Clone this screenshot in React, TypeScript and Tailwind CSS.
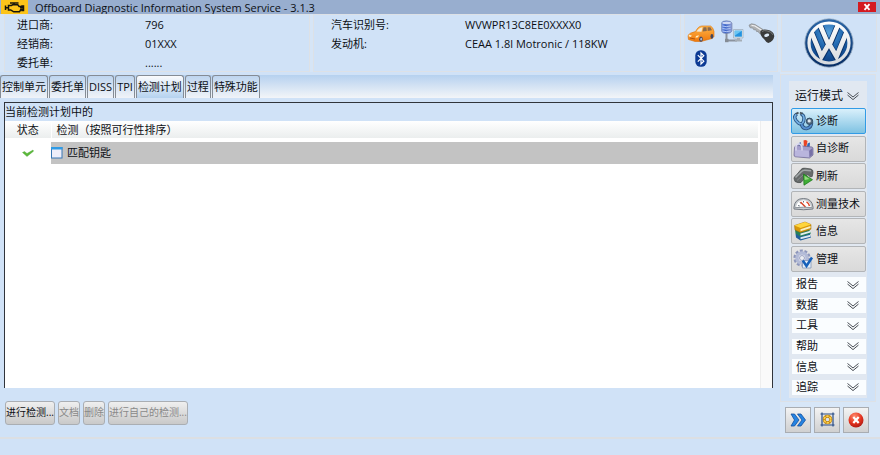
import React from "react";

const Chevrons = () => (
  <svg width="14" height="10" viewBox="0 0 14 10" fill="none" stroke="#4a4f56" strokeWidth="1" aria-hidden="true">
    <path d="M1.500 1.500 7 6 12.500 1.500M1.500 4 7 8.600 12.500 4" />
  </svg>
);

const EngineIcon = () => (
  <svg width="27" height="14" viewBox="0 0 27 14" aria-hidden="true">
    <rect width="27" height="14" fill="#fcc419" />
    <path d="M9 3h8.500M13 3v1.800M4.500 5.500v4.500M5 7.800h2.500M7.500 5.400h3l1-.6h5.300l1.300 1.600h1.700v1.400h1.200V6h1.500v4.500h-1.500V9.600h-1.200l-1.300 2.200h-5.800L9.700 9.900H7.500z" fill="none" stroke="#17150c" strokeWidth="1.500" />
  </svg>
);

const CarIcon = () => (
  <svg width="28" height="20" viewBox="0 0 28 20" aria-hidden="true">
    <defs>
      <linearGradient id="car" x1="0" y1="0" x2="0" y2="1">
        <stop offset="0" stopColor="#ffb74a" />
        <stop offset="1" stopColor="#f0780c" />
      </linearGradient>
    </defs>
    <path d="M1 11.500Q2 9 8.500 7.500C11 3.500 12 2.300 15 2L23.500 2Q26 3 27 7.500L27 12.500 25 14.500 14 17.500 8 17.500 1.500 15.500z" fill="url(#car)" stroke="#d9700c" strokeWidth=".6" />
    <path d="M9.500 7.500Q12 3.500 15.500 3.200L14.500 7.800z" fill="#f3ead8" />
    <path d="M16.500 3.300h3l.3 3.600-4.200.7zM20.500 3.300h3l1.500 3-4.300.6z" fill="#8b6a4c" />
    <path d="M2 10.500l3 1.300-1.500 1.200-2-.8zM9 12l3-.8-1 2-2.500.6z" fill="#ffeec2" />
    <path d="M3 14l5 1" stroke="#b2560f" />
    <ellipse cx="14" cy="15.200" rx="1.800" ry="2.600" fill="#44465c" />
    <ellipse cx="14.200" cy="15.200" rx=".9" ry="1.400" fill="#b5b8c4" />
    <ellipse cx="24.900" cy="12.400" rx="1.400" ry="2.400" fill="#44465c" />
  </svg>
);

const NetworkIcon = () => (
  <svg width="24" height="24" viewBox="0 0 24 24" aria-hidden="true">
    <defs>
      <linearGradient id="server" x1="0" y1="0" x2="1" y2="0">
        <stop offset="0" stopColor="#7b9be6" />
        <stop offset=".35" stopColor="#3a62c8" />
        <stop offset="1" stopColor="#8f9fd6" />
      </linearGradient>
    </defs>
    <path d="M6.500 12v8.500H17" fill="none" stroke="#8b929d" strokeWidth="2" />
    <path d="M1.500 3Q2 .8 6.500.8T12 3v8q-1 2.500-5.500 2.500T1.500 11z" fill="url(#server)" stroke="#7381a8" strokeWidth=".6" />
    <path d="M2 3q.5-1.600 4.500-1.600T11.500 3Q10 4.300 6.500 4.300T2 3z" fill="#cfd8f3" />
    <path d="M2.500 6q3.500 1.300 8 0M2.500 8.500q3.500 1.300 8 0M2.500 11q3.500 1.300 8 0" stroke="#bcd0fb" fill="none" strokeWidth=".9" />
    <path d="M13.500 9.500h9.500v8.500h-9.500z" fill="#dfe8ef" stroke="#9aa9b8" strokeWidth=".7" />
    <path d="M14.700 10.700h7.200v6h-7.200z" fill="#2493df" />
    <path d="M14.700 10.700h7.200l-7.200 5z" fill="#6ac5f2" />
    <path d="M17 18h3v1.500h2v2h-7v-2h2z" fill="#a5adb5" />
    <path d="M5 18.800h3.500v3.400H5z" fill="#858c95" />
  </svg>
);

const KeyIcon = () => (
  <svg width="27" height="21" viewBox="0 0 27 21" aria-hidden="true">
    <path d="M1 2.200L3.500.8 7 1.500l8 5-2 4.500-2-1-.7-1.600-1.700.2-.8-1.900-2 .1L4.800 5 2.200 4.800z" fill="#aeb0b2" stroke="#85888b" strokeWidth=".7" />
    <path d="M3.500 2.300L7 3l6.500 4.300" stroke="#eeeff0" strokeWidth="1.200" fill="none" />
    <path d="M12.500 8Q14.500 6 19 6.800q7 1 7.300 6.500-.8 5-6 6.700-2.300-.8-4.300-4-4.500-3.500-3.500-8z" fill="#3a3b3b" />
    <path d="M14 8.500Q16 7 19 7.900q4.500.5 6 4" stroke="#777a7a" fill="none" />
    <ellipse cx="18.700" cy="12.200" rx="2.600" ry="1.500" fill="#dbe7f4" transform="rotate(-18 18.700 12.200)" />
  </svg>
);

const BluetoothIcon = () => (
  <svg width="12" height="17" viewBox="0 0 12 17" aria-hidden="true">
    <rect x=".300" y=".300" width="11.400" height="16.400" rx="5.200" fill="#0c3a94" />
    <path d="M2.800 5.200l6 6L6 14V3l2.800 2.700-6 6" stroke="#fff" strokeWidth="1.200" fill="none" />
  </svg>
);

const VwLogo = () => (
  <svg width="50" height="50" viewBox="0 0 50 50" role="img" aria-label="Volkswagen">
    <defs>
      <radialGradient id="vwBlue" cx=".5" cy=".25" r=".8">
        <stop offset="0" stopColor="#5aa2dc" />
        <stop offset=".45" stopColor="#1f66ae" />
        <stop offset="1" stopColor="#0b3a7c" />
      </radialGradient>
      <linearGradient id="vwRing" x1="0" y1="0" x2="0" y2="1">
        <stop offset="0" stopColor="#2c67a8" />
        <stop offset="1" stopColor="#062c63" />
      </linearGradient>
      <linearGradient id="chrome" gradientUnits="userSpaceOnUse" x1="0" y1="4" x2="0" y2="46">
        <stop offset="0" stopColor="#fff" />
        <stop offset="1" stopColor="#d6dade" />
      </linearGradient>
      <clipPath id="vwClip"><circle cx="25" cy="25" r="20" /></clipPath>
    </defs>
    <circle cx="25" cy="25" r="24.200" fill="url(#vwRing)" stroke="#9db0c4" strokeWidth=".8" />
    <circle cx="25" cy="25" r="20" fill="url(#vwBlue)" />
    <g clipPath="url(#vwClip)" fill="none">
      <path d="M15 4.500L23.200 24.500h3.600L35 4.500M6.500 12L17.500 39.500 24 27.500h2L32.500 39.500 43.500 12" stroke="#0a3269" strokeWidth="6.200" />
      <path d="M15 4.500L23.200 23.800h3.600L35 4.500M6.500 12L17.500 38.500 23.800 27.500h2.400L32.500 38.500 43.500 12" stroke="url(#chrome)" strokeWidth="4.600" />
    </g>
    <circle cx="25" cy="25" r="20" fill="none" stroke="url(#chrome)" strokeWidth="3.200" />
  </svg>
);

const StethoscopeIcon = () => (
  <svg width="21" height="20" viewBox="0 0 21 20" fill="none" aria-hidden="true">
    <path d="M4 3Q0 5 3 9.500q3 4 6 3.500Q12 9 10.500 5L8 2.500" stroke="#28507e" strokeWidth="3.400" />
    <path d="M4 3Q0 5 3 9.500q3 4 6 3.500Q12 9 10.500 5L8 2.500" stroke="#72aee2" strokeWidth="1.700" />
    <path d="M8.500 13q1 4.500 5 4.500 5-1 5-6" stroke="#28507e" strokeWidth="3.600" />
    <path d="M8.500 13q1 4.500 5 4.500 5-1 5-6" stroke="#558fd0" strokeWidth="1.800" />
    <circle cx="16.500" cy="10.300" r="3.200" fill="#526c82" stroke="#344c63" />
    <circle cx="16.200" cy="9.900" r="1.600" fill="#dfe8ef" />
    <path d="M3 3L5.500 1.500M7 1.500l2.500 1.500" stroke="#46525c" strokeWidth="2" />
  </svg>
);

const ToolboxIcon = () => (
  <svg width="21" height="20" viewBox="0 0 21 20" aria-hidden="true">
    <path d="M5.500 4.500l2-1.500 2 6.500H6z" fill="#3561b4" />
    <path d="M10.500 1.500Q12.500.5 14.500 2L13 9.500h-2z" fill="#ec4323" />
    <path d="M14.500 4.500l2.500-1-.5 6.500h-3z" fill="#2f65b8" />
    <path d="M1.500 8.500Q2 6.500 4.500 6.500L19 8q1 .5 1 1.500v6.500L16.500 19 2.500 17.800Q1 17.500 1 16z" fill="#a49fcb" stroke="#67618f" strokeWidth=".7" />
    <path d="M1.800 10.500l14 1.200.5 6.500L2.800 17.200q-1-.3-1-1.200z" fill="#b9b5dd" />
    <path d="M16.200 11.700L19.500 9v6.700l-3 2.500z" fill="#7771a6" />
    <path d="M3 11.500V7.500Q4 4 6.500 5t2.500 4v2.500" fill="none" stroke="#dcdaf0" strokeWidth="1.500" />
  </svg>
);

const FlashIcon = () => (
  <svg width="21" height="20" viewBox="0 0 21 20" aria-hidden="true">
    <path d="M1 12.500Q1 10.500 3 9.500L8 3.500Q9.500 1.800 12 2.200l6 .8q2.300.7 2 3.500l-.8 4-2.200.3-2.200-2.300L8 16.500q-3 .7-6-1z" fill="#676b6b" stroke="#424646" strokeWidth=".7" />
    <path d="M2.500 11.500l6-6Q10 4 12 4.200l6 .6" fill="none" stroke="#a2a7a8" strokeWidth="1.500" />
    <path d="M4 14.500l6.500-6" fill="none" stroke="#878c8c" />
    <path d="M10.500 8l9 5.700-8.500 5.500z" fill="#40ae35" stroke="#1f7a20" strokeWidth=".8" />
    <path d="M11.500 9.800l5 3.300-4.800 1z" fill="#95da80" />
  </svg>
);

const GaugeIcon = () => (
  <svg width="21" height="20" viewBox="0 0 21 20" aria-hidden="true">
    <path d="M1 15v-2Q2 4.500 10.500 4.500T20 13v2q-9.500 1.500-19 0z" fill="#c8ccd0" stroke="#747a82" strokeWidth="1" />
    <path d="M3 13.200q1-7 7.500-7t7.500 7z" fill="#fff" />
    <path d="M5 11.500l1.800.5M7 8.200L8 9.700M10.500 7v1.500" stroke="#5e6975" strokeWidth=".9" />
    <path d="M13.500 7.800q2.500 1.500 3 4.200" stroke="#e14a2c" strokeWidth="1.500" fill="none" />
    <path d="M7.500 8l5 5" stroke="#d94426" strokeWidth="1.500" />
    <path d="M2 13.700q8.500-1 17 0" stroke="#8e959c" fill="none" />
  </svg>
);

const BooksIcon = () => (
  <svg width="21" height="20" viewBox="0 0 21 20" aria-hidden="true">
    <path d="M2.500 12.500l14-1 1.500 5-10.500 3L3 16.500z" fill="#215f9c" />
    <path d="M7.500 16.200l10-2.500v2l-10 2.600z" fill="#dfeaf1" />
    <path d="M2 8.500l14-.5 2 4.500-10.500 3.300L2.500 12.500z" fill="#27805a" />
    <path d="M7.500 12.500l10-2.800v1.800l-10 2.900z" fill="#e6eff0" />
    <path d="M1.500 4.500L12 1l6 2.500v4.700L7.500 11.500 2 9z" fill="#d8970a" stroke="#9a680a" strokeWidth=".5" />
    <path d="M1.500 4.500L12 1l6 2.500L7.500 7z" fill="#ffd53b" />
    <path d="M7.500 8.200l10-3.200v2l-10 3.200z" fill="#f9efc0" />
  </svg>
);

const GearIcon = () => (
  <svg width="21" height="20" viewBox="0 0 21 20" aria-hidden="true">
    <circle cx="9" cy="9" r="7.300" fill="none" stroke="#8d96bb" strokeWidth="2.600" strokeDasharray="2.900 1.680" />
    <circle cx="9" cy="9" r="5" fill="#f0f1f6" stroke="#b3bbd7" strokeWidth="3.400" />
    <circle cx="9" cy="9" r="2.500" fill="#eceef2" stroke="#8992b7" strokeWidth=".8" />
    <path d="M9.500 11.500V19H18v-7.500z" fill="#e3edf8" stroke="#8497b6" strokeWidth=".8" />
    <path d="M9.800 11.500l3.700 5.500L19 8.500" fill="none" stroke="#1560ba" strokeWidth="2.500" />
  </svg>
);

const CheckIcon = () => (
  <svg width="12" height="8" viewBox="0 0 12 8" role="img" aria-label="OK">
    <path d="M.500 3.500L2.500 2.500l2.500 2L11 1 11.500 2.200 5 7.500z" fill="#5cb83a" stroke="#4aa634" strokeWidth=".4" />
  </svg>
);

const WindowIcon = () => (
  <svg width="12" height="12" viewBox="0 0 12 12" aria-hidden="true">
    <rect x=".500" y=".500" width="10.500" height="10.500" fill="#eeeefa" stroke="#3977b5" />
    <path d="M0 0h11.500v2.500H0z" fill="#2f9be5" />
  </svg>
);

const ForwardIcon = () => (
  <svg width="16" height="14" viewBox="0 0 16 14" aria-hidden="true">
    <path d="M1 1h3.500L9 7l-4.500 6H1l3.500-6zM7.500 1H11l4.500 6-4.500 6H7.500L12 7z" fill="#2584e3" stroke="#134f9d" strokeWidth=".8" />
  </svg>
);

const FrameIcon = () => (
  <svg width="15" height="15" viewBox="0 0 15 15" aria-hidden="true">
    <path d="M.500 2h14M.500 13h14M2 .500v14M13 .500v14" stroke="#294d87" fill="none" strokeWidth="1.200" />
    <circle cx="7.500" cy="7.500" r="3.300" fill="#dfe4ea" stroke="#b98216" strokeWidth="3" />
    <circle cx="7.500" cy="7.500" r="3.300" fill="none" stroke="#ffd14b" strokeWidth="1.700" strokeDasharray="2.600 .85" />
  </svg>
);

const CancelIcon = () => (
  <svg width="16" height="16" viewBox="0 0 16 16" aria-hidden="true">
    <defs>
      <radialGradient id="cancel" cx=".4" cy=".25" r=".8">
        <stop offset="0" stopColor="#ff8a6c" />
        <stop offset=".6" stopColor="#e2311d" />
        <stop offset="1" stopColor="#a71812" />
      </radialGradient>
    </defs>
    <circle cx="8" cy="8" r="7.500" fill="url(#cancel)" />
    <path d="M5.300 5l5.400 6M10.700 5l-5.400 6" stroke="#fff" strokeWidth="2.200" />
  </svg>
);

const tabs = ["控制单元", "委托单", "DISS", "TPI", "检测计划", "过程", "特殊功能"];
const modes = [
  { label: "诊断", Icon: StethoscopeIcon },
  { label: "自诊断", Icon: ToolboxIcon },
  { label: "刷新", Icon: FlashIcon },
  { label: "测量技术", Icon: GaugeIcon },
  { label: "信息", Icon: BooksIcon },
  { label: "管理", Icon: GearIcon },
];
const sections = ["报告", "数据", "工具", "帮助", "信息", "追踪"];
const actions = [
  { label: "进行检测...", enabled: true },
  { label: "文档", enabled: false },
  { label: "删除", enabled: false },
  { label: "进行自己的检测...", enabled: false },
];
const tools = [
  { label: "前进", Icon: ForwardIcon },
  { label: "全屏", Icon: FrameIcon },
  { label: "取消", Icon: CancelIcon },
];

const panel = "border border-[#dde1e6] bg-[#d0e2f7]";

function Details({ rows, columns }: { rows: string[][]; columns: string }) {
  return (
    <dl className={`grid auto-rows-[19px] leading-[19px] ${columns}`}>
      {rows.map(([name, value]) => (
        <React.Fragment key={name}>
          <dt>{name}</dt>
          <dd>{value}</dd>
        </React.Fragment>
      ))}
    </dl>
  );
}

export default function App() {
  return (
    <div className="flex min-h-screen flex-col bg-[#d0e2f7] font-['Open_Sans','Noto_Sans_CJK_SC',sans-serif] text-[11px] text-[#0c0f14]">
      <header className="flex h-[14px] items-center bg-[#98aecf] pr-1 pl-px">
        <EngineIcon />
        <h1 className="flex-1 pl-[7px] text-[11px] leading-[15px]">Offboard Diagnostic Information System Service - 3.1.3</h1>
        <button aria-label="关闭" className="flex h-[10px] w-[18px] items-center justify-center bg-[#d41a20]">
          <svg width="8" height="8" viewBox="0 0 8 8" aria-hidden="true"><path d="M1.500 1.200l5 5.600M6.500 1.200l-5 5.600" stroke="#fff" strokeWidth="1.800" /></svg>
        </button>
      </header>

      <div className="flex h-[58px] gap-[3px] bg-[#d6e5f6] pr-[3px] pl-1">
        <section className={`w-[306px] pl-3 ${panel}`}>
          <Details columns="grid-cols-[128px_1fr]" rows={[["进口商:", "796"], ["经销商:", "01XXX"], ["委托单:", "......"]]} />
        </section>
        <section className={`flex-1 pl-[17px] ${panel}`}>
          <Details columns="grid-cols-[134px_1fr]" rows={[["汽车识别号:", "WVWPR13C8EE0XXXX0"], ["发动机:", "CEAA 1.8l Motronic / 118KW"]]} />
        </section>
        <section className={`w-[94px] px-[2px] pt-[5px] ${panel}`}>
          <div className="flex h-6 items-start justify-between">
            <div className="pt-1"><CarIcon /></div>
            <NetworkIcon />
            <div className="pt-[3px]"><KeyIcon /></div>
          </div>
          <div className="pt-[6px] pl-2"><BluetoothIcon /></div>
        </section>
        <section className={`flex w-[96px] items-center justify-center ${panel}`}>
          <VwLogo />
        </section>
      </div>

      <div className="flex flex-1">
        <main className="flex min-w-0 flex-1 flex-col pt-[3px]">
          <nav role="tablist" className="flex h-[23px] gap-px bg-linear-to-b from-[#b6d1ef] to-[#f3f5f8]">
            {tabs.map((tab) => (
              <button
                key={tab}
                role="tab"
                aria-selected={tab === "检测计划"}
                className={`rounded-t-[3px] border border-b-0 border-[#858c95] px-px whitespace-nowrap ${tab === "检测计划" ? "bg-linear-to-b from-[#fafbfd] to-[#b5d2ef]" : "bg-linear-to-b from-[#bed5ef] to-[#f0f3f8]"}`}
              >
                {tab}
              </button>
            ))}
          </nav>

          <section className="mt-1 ml-1 flex flex-1 flex-col border border-b-0 border-[#30343b]">
            <h2 className="h-[18px] leading-[18px]">当前检测计划中的</h2>
            <div className="flex flex-1 bg-white">
              <div className="min-w-0 flex-1">
                <table className="w-full table-fixed border-collapse text-left">
                  <colgroup>
                    <col className="w-[46px]" />
                    <col />
                  </colgroup>
                  <thead>
                    <tr className="h-[17px] bg-linear-to-b from-white to-[#ebeeee]">
                      <th className="border-r border-white p-0 text-center leading-[17px] font-normal">状态</th>
                      <th className="p-0 pl-[5px] leading-[17px] font-normal">检测（按照可行性排序）</th>
                    </tr>
                  </thead>
                  <tbody>
                    <tr aria-hidden="true" className="h-1"><td colSpan={2} className="p-0" /></tr>
                    <tr className="h-[22px]">
                      <td className="p-0"><div className="flex justify-center"><CheckIcon /></div></td>
                      <td className="bg-[#c3c3c3] p-0">
                        <div className="flex items-center gap-1"><WindowIcon /><span>匹配钥匙</span></div>
                      </td>
                    </tr>
                  </tbody>
                </table>
              </div>
              <div className="ml-[2px] w-[12px] border-l border-[#eeeeee] bg-[#fafafa]" />
            </div>
          </section>

          <div className="flex h-[49px] items-center gap-[3px] pl-[5px]">
            {actions.map(({ label, enabled }) => (
              <button
                key={label}
                disabled={!enabled}
                className="h-6 rounded-[3px] border border-[#aaaeb3] bg-linear-to-b from-[#efefef] to-[#c9c9c9] text-[10px] whitespace-nowrap disabled:text-[#898989]"
              >
                {label}
              </button>
            ))}
          </div>
        </main>

        <aside className="ml-[7px] flex w-[100px] flex-col bg-[#d7e6f7] pt-[2px] pr-1">
          <div className={`flex flex-1 flex-col px-2 pt-[6px] pb-[3px] ${panel}`}>
            <div className="flex flex-1 flex-col bg-[#e1e8f1] pr-px pl-[2px]">
              <button aria-expanded="true" className="flex h-[27px] items-center gap-[3px] pt-[2px] pl-1 text-[12px] whitespace-nowrap">
                运行模式 <Chevrons />
              </button>
              <div className="flex h-[164px] flex-col justify-between">
                {modes.map(({ label, Icon }, index) => (
                  <button
                    key={label}
                    className={`flex h-[26px] w-full items-center gap-[2px] rounded-[2px] border pl-px whitespace-nowrap ${index === 0 ? "border-[#319be6] bg-linear-to-b from-[#d9f0fb] to-[#7ec2e2]" : "border-[#b2b5b8] bg-linear-to-b from-[#e6e6e6] to-[#d9d9d9]"}`}
                  >
                    <Icon />
                    {label}
                  </button>
                ))}
              </div>
              <div className="mt-[5px] flex h-[118px] flex-col justify-between">
                {sections.map((label) => (
                  <button key={label} aria-expanded="false" className="ml-px flex h-[15px] items-center justify-between bg-[#fafdff] pr-[6px] pl-1">
                    {label}
                    <Chevrons />
                  </button>
                ))}
              </div>
            </div>
          </div>
          <div className="flex h-[35px] items-center justify-center gap-[3px] pr-[2px]">
            {tools.map(({ label, Icon }) => (
              <button key={label} aria-label={label} className="flex size-[26px] items-center justify-center border border-[#a9adb2] bg-linear-to-b from-[#f3f3f3] to-[#d0d0d0]">
                <Icon />
              </button>
            ))}
          </div>
        </aside>
      </div>

      <footer className="h-[18px] border-t-2 border-[#dcdfe3]" />
    </div>
  );
}
